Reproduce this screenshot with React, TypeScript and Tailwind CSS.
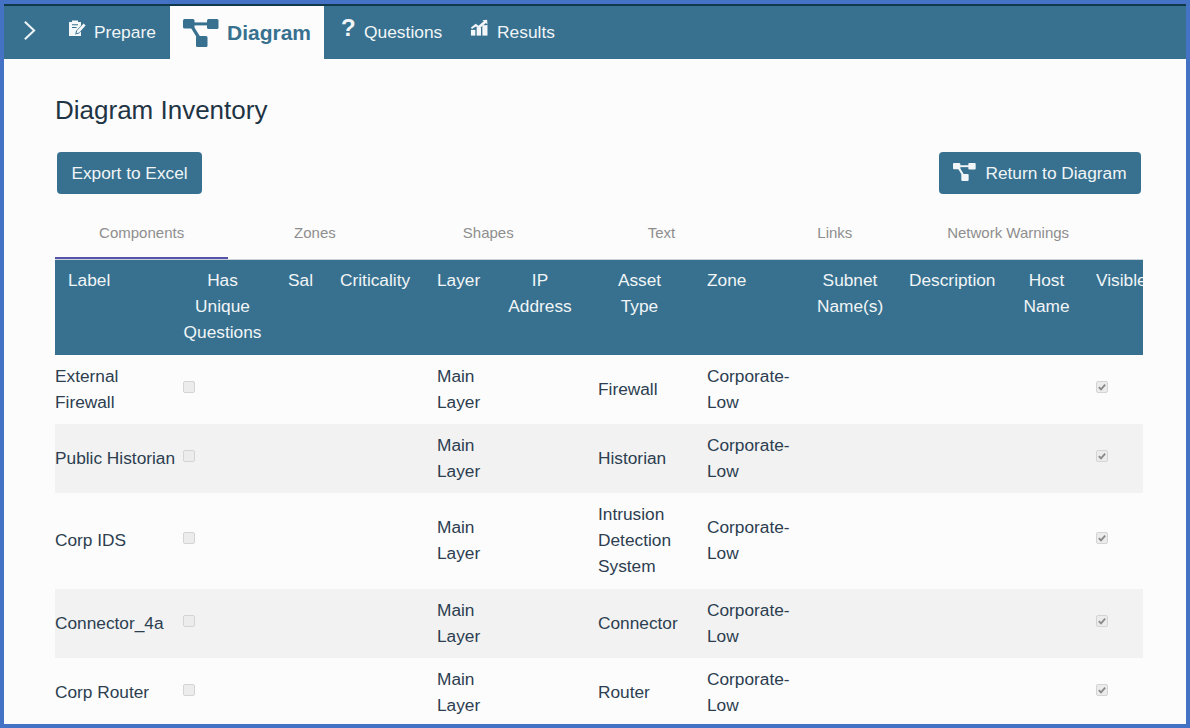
import React from "react";

const font = { fontFamily: '"Liberation Sans", Arial, sans-serif' };

function DiagramIcon({ className }: { className?: string }) {
  return (
    <svg viewBox="0 0 36 28" className={className} fill="currentColor" aria-hidden="true">
      <rect x="0" y="0" width="11.5" height="9.5" rx="1.5" />
      <rect x="24" y="0" width="11.5" height="10" rx="1.5" />
      <rect x="13" y="17" width="11.5" height="11" rx="1.5" />
      <path d="M10 3.4h15v3H10z" />
      <path d="M7.4 8l2.8-1.6 7 11.4-2.8 1.6z" />
    </svg>
  );
}

function PrepareIcon() {
  return (
    <svg viewBox="0 0 18 18" className="w-[18px] h-[18px]" aria-hidden="true">
      <path fill="#f4f7f9" d="M1 3h3V1.5h6V3h3v3.5L8 12l-.8 3.4L11 14.6l2-2V17H1z" />
      <path fill="#f4f7f9" d="M9.2 11.6l6.4-7 2 1.9-6.3 7-2.8.8z" />
      <path fill="#37718f" d="M4 5.2h6v1H4zM4 8h4.5v1H4z" />
    </svg>
  );
}

function ResultsIcon() {
  return (
    <svg viewBox="0 0 20 18" className="w-[19px] h-[18px]" fill="#f4f7f9" aria-hidden="true">
      <rect x="1" y="11" width="4.6" height="6" />
      <rect x="7" y="8.5" width="4.6" height="8.5" />
      <rect x="13" y="6" width="5.4" height="11" />
      <path d="M1 8.5l5-4 3 2.2L14.5 2 13 .8 18 .2l.4 5-1.6-1.4-7.4 6-3.2-2.4L2 10z" />
    </svg>
  );
}

function Check({ checked }: { checked?: boolean }) {
  return (
    <span className="inline-flex w-3 h-3 -translate-y-[3px] rounded-[2px] border border-[#d4d4d4] bg-[#ececec] items-center justify-center align-middle">
      {checked && (
        <svg viewBox="0 0 12 12" className="w-[10px] h-[10px]" aria-hidden="true">
          <path d="M2.2 6.2l2.6 2.6 5-5.6" fill="none" stroke="#8a8a8a" strokeWidth="2.2" />
        </svg>
      )}
    </span>
  );
}

const tabs = ["Components", "Zones", "Shapes", "Text", "Links", "Network Warnings"];

const rows: { label: React.ReactNode; asset: React.ReactNode; h: string }[] = [
  { label: <>External<br />Firewall</>, asset: "Firewall", h: "h-[69px]" },
  { label: "Public Historian", asset: "Historian", h: "h-[69px]" },
  { label: "Corp IDS", asset: <>Intrusion<br />Detection<br />System</>, h: "h-[96px]" },
  { label: "Connector_4a", asset: "Connector", h: "h-[69px]" },
  { label: "Corp Router", asset: "Router", h: "h-[69px]" },
];

const th = "align-top px-[13px] pt-[7px] font-normal";

export default function App() {
  return (
    <div
      style={font}
      className="w-[1190px] h-[728px] overflow-hidden border-4 border-[#4472c4] bg-[#fcfcfc] text-[#2c3e50] text-[17.3px] leading-[26px]"
    >
      <nav className="h-[55px] border-t-2 border-[#12384b] bg-[#37718f] flex text-[#f1f5f7]">
        <div className="w-[50px] flex items-center justify-center pb-1">
          <svg viewBox="0 0 14 22" className="w-[13px] h-[21px]" aria-hidden="true">
            <path d="M2 1.5L12 11 2 20.5" fill="none" stroke="#eef3f6" strokeWidth="2.2" />
          </svg>
        </div>
        <a className="w-[116px] flex items-center gap-[8px] pl-[14px] pb-[2px]">
          <span className="-mt-2"><PrepareIcon /></span>
          <span className="text-[17.4px]">Prepare</span>
        </a>
        <a className="w-[154px] bg-[#fcfcfc] text-[#37718f] flex items-center pl-[13px] gap-[8px] font-bold text-[21px]">
          <DiagramIcon className="w-[36px] h-[28px]" />
          <span>Diagram</span>
        </a>
        <a className="w-[130px] flex items-center pl-[17px] gap-[10px] pb-[2px]">
          <span className="font-bold text-[24px] -mt-2 w-[13px]">?</span>
          <span className="text-[17.4px]">Questions</span>
        </a>
        <a className="flex items-center gap-[8px] pl-[16px] pb-[2px]">
          <span className="-mt-2"><ResultsIcon /></span>
          <span className="text-[17.4px]">Results</span>
        </a>
      </nav>

      <main className="pl-[51px] pr-[43px]">
        <h1 className="text-[26px] leading-[30px] pt-[36px] text-[#1f3444]">Diagram Inventory</h1>

        <div className="flex justify-between mt-[27px] pl-[2px] pr-[2px]">
          <button className="h-[42px] w-[145px] rounded bg-[#37718f] text-[#f1f5f7] text-[17.3px]">Export to Excel</button>
          <button className="h-[42px] w-[202px] rounded bg-[#37718f] text-[#f1f5f7] text-[17.3px] flex items-center justify-center gap-[9px]">
            <DiagramIcon className="w-[23px] h-[18px] -mt-[2px]" />
            Return to Diagram
          </button>
        </div>

        <div className="grid grid-cols-[repeat(6,173.3px)] mt-[19px] text-[15px] text-[#8e8e8e] h-[46px]">
          {tabs.map((t, i) => (
            <div
              key={t}
              className={`flex items-start justify-center pt-[7px] h-[46px] ${i === 0 ? "border-b-2 border-[#5654a8]" : ""}`}
            >
              {t}
            </div>
          ))}
        </div>

        <div className="w-[1088px] overflow-hidden border-t border-[#c9d3d9]">
          <table className="table-fixed w-[1128px] border-collapse">
            <colgroup>
              {[128, 92, 52, 97, 71, 90, 109, 110, 92, 114, 73, 100].map((w, i) => (
                <col key={i} style={{ width: w }} />
              ))}
            </colgroup>
            <thead className="bg-[#37718f] text-[#f1f5f7]">
              <tr className="h-[95px]">
                <th className={`${th} text-left`}>Label</th>
                <th className="align-top pr-[13px] pt-[7px] font-normal text-center">Has<br />Unique<br />Questions</th>
                <th className={`${th} text-left`}>Sal</th>
                <th className={`${th} text-left`}>Criticality</th>
                <th className={`${th} text-left`}>Layer</th>
                <th className={`${th} text-center`}>IP<br />Address</th>
                <th className={`${th} text-center`}>Asset<br />Type</th>
                <th className={`${th} text-left`}>Zone</th>
                <th className={`${th} text-center`}>Subnet<br />Name(s)</th>
                <th className={`${th} text-left`}>Description</th>
                <th className={`${th} text-center`}>Host<br />Name</th>
                <th className={`${th} text-left whitespace-nowrap`}>Visible</th>
              </tr>
            </thead>
            <tbody>
              {rows.map((r, i) => (
                <tr key={i} className={`${r.h} ${i % 2 === 1 ? "bg-[#f2f2f2]" : ""}`}>
                  <td className="align-middle whitespace-nowrap pb-[2px]">{r.label}</td>
                  <td className="pb-[2px]"><Check /></td>
                  <td />
                  <td />
                  <td className="px-[13px] pb-[2px]">Main<br />Layer</td>
                  <td />
                  <td className="px-[13px] pb-[2px]">{r.asset}</td>
                  <td className="px-[13px] pb-[2px]">Corporate-<br />Low</td>
                  <td />
                  <td />
                  <td />
                  <td className="px-[13px] pb-[2px]"><Check checked /></td>
                </tr>
              ))}
            </tbody>
          </table>
        </div>
      </main>
    </div>
  );
}
